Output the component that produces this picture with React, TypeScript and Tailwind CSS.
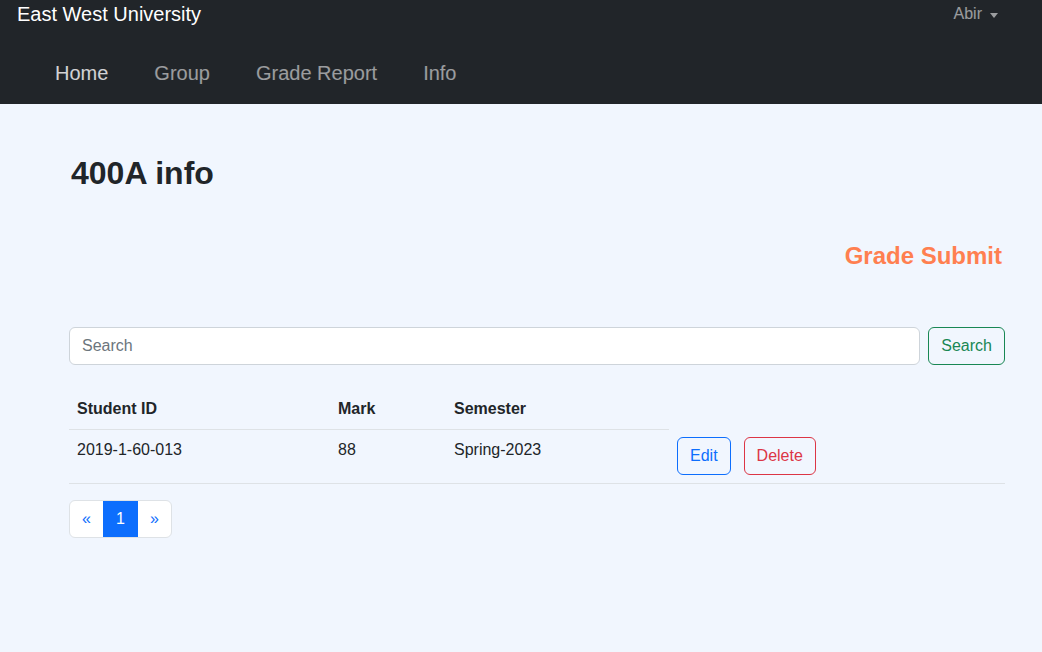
import React from "react";

const rows = [{ id: "2019-1-60-013", mark: "88", semester: "Spring-2023" }];

const App = () => {
  return (
    <div className="min-h-[652px] bg-[#f1f6fe] font-['Liberation_Sans',Arial,sans-serif] text-[#212529]">
      {/* navbar */}
      <div className="h-[104px] bg-[#212529]">
        <div className="flex h-[28px] items-center justify-between">
          <span className="pl-[17px] text-[20px] leading-[28px] text-white">East West University</span>
          <button className="mr-[44px] flex items-center text-[16px] text-white/55">
            Abir
            <span className="ml-[8px] mt-[2px] h-0 w-0 border-x-[4px] border-t-[5px] border-x-transparent border-t-white/55" />
          </button>
        </div>
        <div className="flex gap-[46px] pl-[55px] pt-[31px] text-[20px] leading-[28px]">
          <a className="text-white/80">Home</a>
          <a className="text-white/55">Group</a>
          <a className="text-white/55">Grade Report</a>
          <a className="text-white/55">Info</a>
        </div>
      </div>

      <div className="mx-[69px] w-[936px]">
        <h2 className="mt-[50px] pl-[2px] text-[32px] font-bold leading-[38px]">400A info</h2>
        <div className="mt-[49px] pr-[3px] text-right text-[24px] font-bold leading-[29px] text-[#ff7f50]">
          Grade Submit
        </div>

        <div className="mt-[57px] flex gap-[8px]">
          <input
            placeholder="Search"
            className="h-[38px] flex-1 rounded-[6px] border border-[#ced4da] bg-white px-[12px] text-[16px] placeholder:text-[#6c757d] outline-none"
          />
          <button className="h-[38px] rounded-[6px] border border-[#198754] px-[12px] text-[16px] text-[#198754]">
            Search
          </button>
        </div>

        <table className="mt-[24px] w-full table-fixed border-collapse text-left text-[16px] leading-[24px]">
          <colgroup>
            <col className="w-[261px]" />
            <col className="w-[116px]" />
            <col className="w-[223px]" />
            <col />
          </colgroup>
          <thead>
            <tr>
              <th className="border-b border-[#dee2e6] p-[8px] font-bold">Student ID</th>
              <th className="border-b border-[#dee2e6] p-[8px] font-bold">Mark</th>
              <th className="border-b border-[#dee2e6] p-[8px] font-bold">Semester</th>
            </tr>
          </thead>
          <tbody>
            {rows.map((r) => (
              <tr key={r.id}>
                <td className="border-b border-[#dee2e6] p-[8px] align-top">{r.id}</td>
                <td className="border-b border-[#dee2e6] p-[8px] align-top">{r.mark}</td>
                <td className="border-b border-[#dee2e6] p-[8px] align-top">{r.semester}</td>
                <td className="border-b border-[#dee2e6] px-[8px] pb-[8px] pt-[7px]">
                  <div className="flex gap-[13px]">
                    <button className="h-[38px] rounded-[6px] border border-[#0d6efd] px-[12px] text-[#0d6efd]">Edit</button>
                    <button className="h-[38px] rounded-[6px] border border-[#dc3545] px-[12px] text-[#dc3545]">Delete</button>
                  </div>
                </td>
              </tr>
            ))}
          </tbody>
        </table>

        <div className="mt-[16px] flex">
          <div className="flex h-[38px] overflow-hidden rounded-[6px] border border-[#dee2e6] bg-white text-[16px]">
            <a className="flex w-[33px] items-center justify-center text-[#0d6efd]">«</a>
            <a className="flex w-[35px] items-center justify-center bg-[#0d6efd] text-white">1</a>
            <a className="flex w-[33px] items-center justify-center text-[#0d6efd]">»</a>
          </div>
        </div>
      </div>
    </div>
  );
};

export default App;
